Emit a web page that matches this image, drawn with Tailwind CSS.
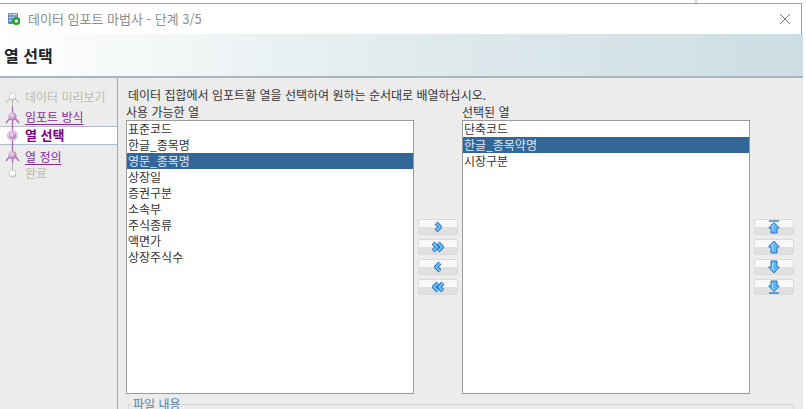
<!DOCTYPE html>
<html lang="ko">

<head>
  <meta charset="UTF-8">
  <meta name="viewport" content="width=device-width, initial-scale=1.0">
  <title>데이터 임포트 마법사</title>
  <script src="https://cdn.jsdelivr.net/npm/@tailwindcss/browser@4"></script>
</head>

<body class="bg-white h-screen overflow-hidden flex flex-col pr-[3px] font-['Noto_Sans_CJK_KR',sans-serif] text-xs leading-4 text-[#333]">
  <!-- Window edge behind the dialog -->
  <div class="h-[3px] shrink-0 flex justify-end pr-[106px]">
    <div class="w-0.5 bg-[#d4d4d4]"></div>
  </div>

  <!-- Title bar -->
  <header class="h-[31px] shrink-0 mr-px flex items-center border-t border-r border-[#a0a0a0] pl-2 pr-2.5 text-[13px] text-[#8c8c8c]">
    <svg class="size-3 mr-2" viewBox="0 0 12 12">
      <rect x="0" y="0" width="10" height="11" rx="1" fill="#5b87bd" />
      <path d="M1 1.5h8M1 4.5h8M1 7.5h5" stroke="#c5daf2" stroke-width="1.5" />
      <path d="M3.5 1v9" stroke="#5b87bd" stroke-width=".7" />
      <circle cx="8.3" cy="8" r="4" fill="#19a516" />
      <circle cx="8.3" cy="8" r="1.7" fill="#fff" />
    </svg>
    <span>데이터 임포트 마법사 - 단계 3/5</span>
    <button type="button" aria-label="닫기" class="ml-auto">
      <svg class="size-3 block" viewBox="0 0 12 12" fill="none" stroke="#777" stroke-width="1">
        <path d="M1 1l10 10M11 1L1 11" />
      </svg>
    </button>
  </header>

  <!-- Step heading -->
  <div class="h-11 shrink-0 flex items-center pl-1 bg-linear-to-r from-white via-[#e1ebed] to-[#ccdee4] border-b-2 border-[#a8b6c2]">
    <h1 class="text-base font-bold text-[#222]">열 선택</h1>
  </div>

  <div class="flex-1 min-h-0 flex bg-[#ececec]">
    <!-- Steps -->
    <nav class="relative w-[118px] shrink-0 border-r border-[#9da9b5] pt-[9px]">
      <ol>
        <li class="h-5 leading-5 pl-[25px] text-[#bcbcad]">데이터 미리보기</li>
        <li class="h-[19px] leading-5 pl-[25px]"><a href="#" class="text-[#882b91] underline underline-offset-2">임포트 방식</a></li>
        <li class="h-[19px] leading-4 pl-[25px] bg-white border-y border-[#aebccc] text-[13px] font-bold text-[#800080]">열 선택</li>
        <li class="h-5 leading-6 pl-[25px]"><a href="#" class="text-[#882b91] underline underline-offset-2">열 정의</a></li>
        <li class="h-5 leading-4 pl-[25px] text-[#bcbcad]">완료</li>
      </ol>
      <svg class="absolute left-0 top-0 w-[25px] h-[110px]" viewBox="0 0 25 110" fill="none">
        <defs>
          <radialGradient id="done" cx=".4" cy=".35" r=".7">
            <stop offset="0" stop-color="#f4e3f5" />
            <stop offset="1" stop-color="#a86bb0" />
          </radialGradient>
          <radialGradient id="idle" cx=".4" cy=".3" r=".8">
            <stop offset="0" stop-color="#fff" />
            <stop offset=".6" stop-color="#f8f8f8" />
            <stop offset="1" stop-color="#a5a5a5" />
          </radialGradient>
        </defs>
        <path d="M12.5 20v9M12.5 84v8M10 20l-4 5M15 20l4 5" stroke="#b0b0b0" />
        <path d="M12.5 29v55M10 40l-4 5M15 40l4 5M10 78l-4 5M15 78l4 5" stroke="#a568ad" stroke-width="1.3" />
        <circle cx="12.5" cy="18.5" r="3.5" fill="url(#idle)" stroke="#b8b8b8" stroke-width=".6" />
        <circle cx="12.5" cy="38.5" r="4" fill="url(#done)" />
        <circle cx="12.5" cy="57.5" r="4.8" fill="#f0e2f1" stroke="#c9a1ce" />
        <circle cx="12.5" cy="57.5" r="3.5" fill="url(#done)" />
        <circle cx="12.5" cy="77" r="4" fill="url(#done)" />
        <circle cx="12.5" cy="95.5" r="3.5" fill="url(#idle)" stroke="#b8b8b8" stroke-width=".6" />
      </svg>
    </nav>

    <!-- Column picker -->
    <main class="flex-1 min-w-0 overflow-hidden pl-2 pr-[9px] pt-[9px]">
      <p class="pl-0.5">데이터 집합에서 임포트할 열을 선택하여 원하는 순서대로 배열하십시오.</p>

      <div class="grid grid-cols-[1fr_40px_1fr_40px] gap-x-1 items-center pt-px">
        <label for="available" class="col-span-2">사용 가능한 열</label>
        <label for="selected" class="col-span-2">선택된 열</label>

        <select id="available" multiple size="17" class="w-full h-[274px] bg-white border border-[#9a9a9a] rounded-none p-0 overflow-hidden outline-none">
          <option class="flex items-end h-4 p-0 pl-px">표준코드</option>
          <option class="flex items-end h-4 p-0 pl-px">한글_종목명</option>
          <option selected class="flex items-end h-4 p-0 pl-px bg-linear-to-r from-[#336699] to-[#336699] [-webkit-text-fill-color:#dfeaf5]">영문_종목명</option>
          <option class="flex items-end h-4 p-0 pl-px">상장일</option>
          <option class="flex items-end h-4 p-0 pl-px">증권구분</option>
          <option class="flex items-end h-4 p-0 pl-px">소속부</option>
          <option class="flex items-end h-4 p-0 pl-px">주식종류</option>
          <option class="flex items-end h-4 p-0 pl-px">액면가</option>
          <option class="flex items-end h-4 p-0 pl-px">상장주식수</option>
        </select>

        <!-- Move between lists -->
        <div class="flex flex-col gap-1">
          <button type="button" aria-label="추가" class="h-4 flex items-center justify-center rounded-xs border border-[#dadada] bg-linear-to-b from-[#f8f8f8] from-50% to-[#e0e0e0] to-50%">
            <svg class="w-4 h-3" viewBox="0 0 16 12" fill="none" stroke-linejoin="round">
              <path d="M6 2l4 4-4 4" stroke="#2a72bd" stroke-width="4" />
              <path d="M6 2l4 4-4 4" stroke="#6cc0ff" stroke-width="2" />
            </svg>
          </button>
          <button type="button" aria-label="모두 추가" class="h-4 flex items-center justify-center rounded-xs border border-[#dadada] bg-linear-to-b from-[#f8f8f8] from-50% to-[#e0e0e0] to-50%">
            <svg class="w-4 h-3" viewBox="0 0 16 12" fill="none" stroke-linejoin="round">
              <path d="M3 2l4 4-4 4M8 2l4 4-4 4" stroke="#2a72bd" stroke-width="4" />
              <path d="M3 2l4 4-4 4M8 2l4 4-4 4" stroke="#6cc0ff" stroke-width="2" />
            </svg>
          </button>
          <button type="button" aria-label="제거" class="h-4 flex items-center justify-center rounded-xs border border-[#dadada] bg-linear-to-b from-[#f8f8f8] from-50% to-[#e0e0e0] to-50%">
            <svg class="w-4 h-3" viewBox="0 0 16 12" fill="none" stroke-linejoin="round">
              <path d="M10 2L6 6l4 4" stroke="#2a72bd" stroke-width="4" />
              <path d="M10 2L6 6l4 4" stroke="#6cc0ff" stroke-width="2" />
            </svg>
          </button>
          <button type="button" aria-label="모두 제거" class="h-4 flex items-center justify-center rounded-xs border border-[#dadada] bg-linear-to-b from-[#f8f8f8] from-50% to-[#e0e0e0] to-50%">
            <svg class="w-4 h-3" viewBox="0 0 16 12" fill="none" stroke-linejoin="round">
              <path d="M8 2L4 6l4 4M13 2L9 6l4 4" stroke="#2a72bd" stroke-width="4" />
              <path d="M8 2L4 6l4 4M13 2L9 6l4 4" stroke="#6cc0ff" stroke-width="2" />
            </svg>
          </button>
        </div>

        <select id="selected" multiple size="17" class="w-full h-[274px] bg-white border border-[#9a9a9a] rounded-none p-0 overflow-hidden outline-none">
          <option class="flex items-end h-4 p-0 pl-px">단축코드</option>
          <option selected class="flex items-end h-4 p-0 pl-px bg-linear-to-r from-[#336699] to-[#336699] [-webkit-text-fill-color:#dfeaf5]">한글_종목약명</option>
          <option class="flex items-end h-4 p-0 pl-px">시장구분</option>
        </select>

        <!-- Reorder -->
        <div class="flex flex-col gap-1">
          <button type="button" aria-label="맨 위로" class="h-4 flex items-center justify-center rounded-xs border border-[#dadada] bg-linear-to-b from-[#f8f8f8] from-50% to-[#e0e0e0] to-50%">
            <svg class="w-3 h-[14px]" viewBox="0 0 12 14" fill="#5ab8fb" stroke="#2a72bd" stroke-linejoin="round">
              <path d="M1 1h10" stroke-width="1.3" />
              <path d="M6 2.5L.7 8H3v5h6V8h2.3z" />
              <path d="M6 4.5L4.5 6.5V11" fill="none" stroke="#a5dcff" />
            </svg>
          </button>
          <button type="button" aria-label="위로" class="h-4 flex items-center justify-center rounded-xs border border-[#dadada] bg-linear-to-b from-[#f8f8f8] from-50% to-[#e0e0e0] to-50%">
            <svg class="w-3 h-[14px]" viewBox="0 0 12 14" fill="#5ab8fb" stroke="#2a72bd" stroke-linejoin="round">
              <path d="M6 1L.7 7H3v6h6V7h2.3z" />
              <path d="M6 3L4.5 5v6" fill="none" stroke="#a5dcff" />
            </svg>
          </button>
          <button type="button" aria-label="아래로" class="h-4 flex items-center justify-center rounded-xs border border-[#dadada] bg-linear-to-b from-[#f8f8f8] from-50% to-[#e0e0e0] to-50%">
            <svg class="w-3 h-[14px]" viewBox="0 0 12 14" fill="#5ab8fb" stroke="#2a72bd" stroke-linejoin="round">
              <path d="M6 13L.7 7H3V1h6v6h2.3z" />
              <path d="M4.5 3v6L6 11" fill="none" stroke="#a5dcff" />
            </svg>
          </button>
          <button type="button" aria-label="맨 아래로" class="h-4 flex items-center justify-center rounded-xs border border-[#dadada] bg-linear-to-b from-[#f8f8f8] from-50% to-[#e0e0e0] to-50%">
            <svg class="w-3 h-[14px]" viewBox="0 0 12 14" fill="#5ab8fb" stroke="#2a72bd" stroke-linejoin="round">
              <path d="M1 13h10" stroke-width="1.3" />
              <path d="M6 11.5L.7 6H3V1h6v5h2.3z" />
              <path d="M4.5 3v5L6 9.5" fill="none" stroke="#a5dcff" />
            </svg>
          </button>
        </div>
      </div>

      <!-- File contents -->
      <fieldset class="mt-0.5 ml-0.5 h-24 border border-[#d4d4d4] px-[3px]">
        <legend class="px-px text-[#5580ad]">파일 내용</legend>
      </fieldset>
    </main>
  </div>
</body>

</html>
